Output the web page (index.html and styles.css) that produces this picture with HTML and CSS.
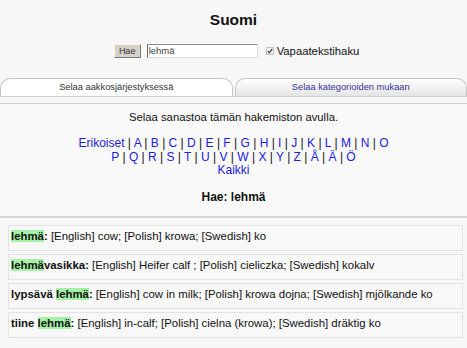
FILE: index.html
```html
<!DOCTYPE html>
<html lang="fi">
<head>
<meta charset="utf-8">
<title>Suomi</title>
<link rel="stylesheet" href="styles.css">
</head>
<body>
<h1 class="title">Suomi</h1>
<form class="search">
  <button type="button" class="btn">Hae</button>
  <span class="field">lehmä</span>
  <span class="check"><svg width="8" height="8" viewBox="0 0 8 8"><rect x="0.5" y="0.5" width="7" height="7" fill="#f4f4f4" stroke="#c4c4c4"/><path d="M1.8 4.2 L3.3 5.8 L6.3 2" fill="none" stroke="#444" stroke-width="1.3"/></svg></span>
  <span class="label">Vapaatekstihaku</span>
</form>
<div class="tabs">
  <div class="tab active">Selaa aakkosjärjestyksessä</div>
  <div class="tab">Selaa kategorioiden mukaan</div>
</div>
<div class="browse">
  <p class="intro">Selaa sanastoa tämän hakemiston avulla.</p>
  <div class="letters">
    <div class="line"><a>Erikoiset</a> | <a>A</a> | <a>B</a> | <a>C</a> | <a>D</a> | <a>E</a> | <a>F</a> | <a>G</a> | <a>H</a> | <a>I</a> | <a>J</a> | <a>K</a> | <a>L</a> | <a>M</a> | <a>N</a> | <a>O</a></div>
    <div class="line"><a>P</a> | <a>Q</a> | <a>R</a> | <a>S</a> | <a>T</a> | <a>U</a> | <a>V</a> | <a>W</a> | <a>X</a> | <a>Y</a> | <a>Z</a> | <a>Å</a> | <a>Ä</a> | <a>Ö</a></div>
    <div class="line"><a>Kaikki</a></div>
  </div>
  <h2 class="query">Hae: lehmä</h2>
</div>
<div class="entries">
  <div class="entry"><b><mark>lehmä</mark>:</b> [English] cow; [Polish] krowa; [Swedish] ko</div>
  <div class="entry"><b><mark>lehmä</mark>vasikka:</b> [English] Heifer calf ; [Polish] cieliczka; [Swedish] kokalv</div>
  <div class="entry"><b>lypsävä <mark>lehmä</mark>:</b> [English] cow in milk; [Polish] krowa dojna; [Swedish] mjölkande ko</div>
  <div class="entry"><b>tiine <mark>lehmä</mark>:</b> [English] in-calf; [Polish] cielna (krowa); [Swedish] dräktig ko</div>
</div>
</body>
</html>
```
FILE: styles.css
```css
html, body {
  margin: 0;
  padding: 0;
}
body {
  background: #f7f7f7;
  font-family: "Liberation Sans", Arial, sans-serif;
  color: #111;
  width: 467px;
  height: 348px;
  overflow: hidden;
}
.title {
  margin: 0;
  padding-top: 11px;
  height: 18px;
  line-height: 18px;
  font-size: 15.5px;
  font-weight: bold;
  text-align: center;
  color: #111;
}
.search {
  margin: 15px 0 0;
  display: flex;
  justify-content: center;
  align-items: center;
  height: 14px;
  padding-left: 6px;
}
.btn {
  box-sizing: border-box;
  width: 27px;
  height: 14px;
  padding: 0;
  margin: 0 6px 0 0;
  background: #d6d2ca;
  border: 1px solid;
  border-color: #f4f4f4 #7a7a7a #7a7a7a #f4f4f4;
  font-family: "Liberation Sans", Arial, sans-serif;
  font-size: 9px;
  line-height: 12px;
  color: #333;
}
.field {
  box-sizing: border-box;
  width: 111px;
  height: 14px;
  background: #fff;
  border: 1px solid;
  border-color: #8a8a8a #dcdcdc #dcdcdc #6a6a6a;
  font-size: 9.5px;
  line-height: 12px;
  padding-left: 1px;
  color: #444;
}
.check {
  display: flex;
  margin-left: 8px;
  margin-right: 3px;
}
.label {
  font-size: 11.3px;
  color: #111;
}
.tabs {
  margin-top: 20px;
  display: flex;
  gap: 2px;
  height: 18px;
  border-bottom: 1px solid #cfcfcf;
}
.tab {
  flex: 1;
  box-sizing: border-box;
  height: 18px;
  border: 1px solid #c6c6c6;
  border-bottom: none;
  border-radius: 10px 10px 0 0;
  background: linear-gradient(#ffffff, #e4e4e4);
  font-size: 9.3px;
  line-height: 16px;
  text-align: center;
  color: #333399;
}
.tab.active {
  background: #fff;
  color: #333;
}
.browse {
  margin-top: 6px;
  border-top: 1px solid #cfcfcf;
  border-bottom: 2px solid #d6d6d6;
  background: #f9f9f9;
  padding: 6px 0 11px;
  text-align: center;
}
.intro {
  margin: 0;
  font-size: 11.3px;
  line-height: 14px;
  color: #111;
}
.letters {
  margin-top: 13px;
  font-size: 12px;
  line-height: 13.5px;
  color: #111;
}
.letters a {
  color: #2020e0;
  text-decoration: none;
}
.query {
  margin: 12px 0 0;
  font-size: 12px;
  line-height: 15px;
  font-weight: bold;
}
.entries {
  margin-top: 7px;
  padding: 0 4px 0 8px;
  display: flex;
  flex-direction: column;
  gap: 3px;
}
.entry {
  box-sizing: border-box;
  height: 26px;
  border: 1px solid #e3e3e3;
  background: #f8f8f8;
  padding: 3px 0 0 2px;
  font-size: 11.4px;
  line-height: 14px;
  color: #111;
}
.entry b {
  font-weight: bold;
}
mark {
  background: #a3f2a3;
  color: #111;
}
```
